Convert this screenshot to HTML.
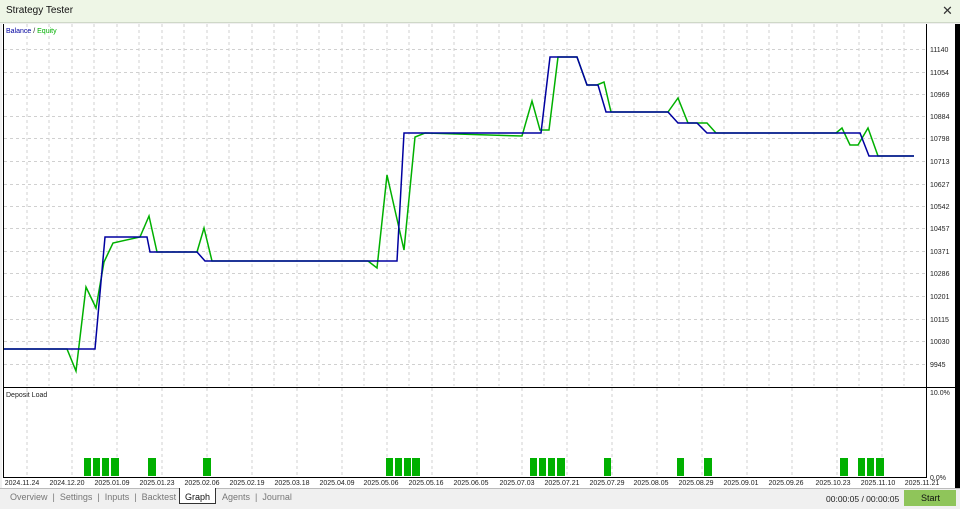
<!DOCTYPE html><html><head><style>
body{margin:0;width:960px;height:508px;background:#f0f0f0;font-family:"Liberation Sans",sans-serif;position:relative;overflow:hidden}
.t{position:absolute;font-size:8px;color:#222}
</style></head><body>
<div style="position:absolute;left:0;top:0;width:960px;height:22px;background:#eef6e6;border-bottom:1px solid #cfd8c8"></div>
<div class="t" style="left:6px;top:5px;font-size:10px;color:#111">Strategy Tester</div>
<div class="t" style="left:942px;top:3px;font-size:13px;color:#333">✕</div>
<div style="position:absolute;left:2px;top:24px;width:954px;height:464px;background:#fff"></div>
<div style="position:absolute;left:955px;top:24px;width:5px;height:464px;background:#000"></div>
<svg width="960" height="508" style="position:absolute;left:0;top:0">
<g stroke="#d0d0d0" stroke-dasharray="3,3" stroke-width="1">
<path d="M27 24V386M49 24V386M72 24V386M94 24V386M117 24V386M139 24V386M162 24V386M184 24V386M207 24V386M229 24V386M252 24V386M274 24V386M297 24V386M319 24V386M342 24V386M364 24V386M387 24V386M409 24V386M432 24V386M454 24V386M477 24V386M499 24V386M522 24V386M544 24V386M567 24V386M589 24V386M612 24V386M634 24V386M657 24V386M679 24V386M702 24V386M724 24V386M747 24V386M769 24V386M792 24V386M814 24V386M837 24V386M859 24V386M882 24V386M904 24V386"/>
<path d="M4 49.5H926M4 72.5H926M4 94.5H926M4 116.5H926M4 138.5H926M4 161.5H926M4 184.5H926M4 206.5H926M4 228.5H926M4 251.5H926M4 273.5H926M4 296.5H926M4 319.5H926M4 341.5H926M4 364.5H926"/>
<path d="M27 388V476M72 388V476M117 388V476M162 388V476M207 388V476M252 388V476M297 388V476M342 388V476M387 388V476M432 388V476M477 388V476M522 388V476M567 388V476M612 388V476M657 388V476M702 388V476M747 388V476M792 388V476M837 388V476M882 388V476"/>
</g>
<path d="M926.5 24V477M3.5 24V477M3 477.5H927M3 387.5H960" stroke="#000" fill="none"/>
<polyline fill="none" stroke="#00b000" stroke-width="1.5" points="4,349 67,349 76,371 86,287 96,308 104,262 113,243 140,237 149,216 157,252 197,252 204,228 212,261 368,261 377,268 387,175 404,250 415,137 425,133 522,136 532,101 540,130 549,130 558,57 577,57 587,85 597,85 604,82 611,112 668,112 678,98 688,123 707,123 716,133 836,133 842,128 850,145 858,145 868,128 878,156 914,156"/>
<polyline fill="none" stroke="#0000a0" stroke-width="1.5" points="4,349 95,349 105,237 147,237 150,252 197,252 205,261 397,261 404,133 541,133 550,57 577,57 587,85 598,85 606,112 668,112 678,123 697,123 707,133 860,133 869,156 914,156"/>
<g fill="#00b000">
<rect x="84" y="458" width="7" height="18"/><rect x="93" y="458" width="7" height="18"/><rect x="102" y="458" width="7" height="18"/><rect x="111" y="458" width="8" height="18"/><rect x="148" y="458" width="8" height="18"/><rect x="203" y="458" width="8" height="18"/><rect x="386" y="458" width="7" height="18"/><rect x="395" y="458" width="7" height="18"/><rect x="404" y="458" width="7" height="18"/><rect x="412" y="458" width="8" height="18"/><rect x="530" y="458" width="7" height="18"/><rect x="539" y="458" width="7" height="18"/><rect x="548" y="458" width="7" height="18"/><rect x="557" y="458" width="8" height="18"/><rect x="604" y="458" width="7" height="18"/><rect x="677" y="458" width="7" height="18"/><rect x="704" y="458" width="8" height="18"/><rect x="840" y="458" width="8" height="18"/><rect x="858" y="458" width="7" height="18"/><rect x="867" y="458" width="7" height="18"/><rect x="876" y="458" width="8" height="18"/>
</g>
<g font-family="Liberation Sans" font-size="7" fill="#222">
<text x="930" y="52">11140</text><text x="930" y="75">11054</text><text x="930" y="97">10969</text><text x="930" y="119">10884</text><text x="930" y="141">10798</text><text x="930" y="164">10713</text><text x="930" y="187">10627</text><text x="930" y="209">10542</text><text x="930" y="231">10457</text><text x="930" y="254">10371</text><text x="930" y="276">10286</text><text x="930" y="299">10201</text><text x="930" y="322">10115</text><text x="930" y="344">10030</text><text x="930" y="367">9945</text>
<text x="930" y="395">10.0%</text><text x="930" y="480">0.0%</text>
<g text-anchor="middle"><text x="22" y="485">2024.11.24</text><text x="67" y="485">2024.12.20</text><text x="112" y="485">2025.01.09</text><text x="157" y="485">2025.01.23</text><text x="202" y="485">2025.02.06</text><text x="247" y="485">2025.02.19</text><text x="292" y="485">2025.03.18</text><text x="337" y="485">2025.04.09</text><text x="381" y="485">2025.05.06</text><text x="426" y="485">2025.05.16</text><text x="471" y="485">2025.06.05</text><text x="517" y="485">2025.07.03</text><text x="562" y="485">2025.07.21</text><text x="607" y="485">2025.07.29</text><text x="651" y="485">2025.08.05</text><text x="696" y="485">2025.08.29</text><text x="741" y="485">2025.09.01</text><text x="786" y="485">2025.09.26</text><text x="833" y="485">2025.10.23</text><text x="878" y="485">2025.11.10</text><text x="922" y="485">2025.11.21</text></g>
<text x="6" y="33"><tspan fill="#0000a0">Balance</tspan> / <tspan fill="#00b000">Equity</tspan></text>
<text x="6" y="397">Deposit Load</text>
</g>
</svg>
<div style="position:absolute;left:0;top:488px;width:960px;height:20px;background:#f0f0f0;border-top:1px solid #bbb"></div>
<div class="t" style="left:10px;top:492px;font-size:9px;color:#777">Overview &nbsp;|&nbsp; Settings &nbsp;|&nbsp; Inputs &nbsp;|&nbsp; Backtest</div>
<div style="position:absolute;left:179px;top:488px;width:35px;height:15px;background:#fff;border:1px solid #333;border-top:none"></div>
<div class="t" style="left:185px;top:492px;font-size:9px;color:#111">Graph</div>
<div class="t" style="left:222px;top:492px;font-size:9px;color:#777">Agents &nbsp;|&nbsp; Journal</div>
<div class="t" style="left:826px;top:494px;font-size:8.5px;color:#222">00:00:05 / 00:00:05</div>
<div style="position:absolute;left:904px;top:490px;width:52px;height:16px;background:#8fc55a"></div>
<div class="t" style="left:921px;top:493px;font-size:9px;color:#111">Start</div>
</body></html>
